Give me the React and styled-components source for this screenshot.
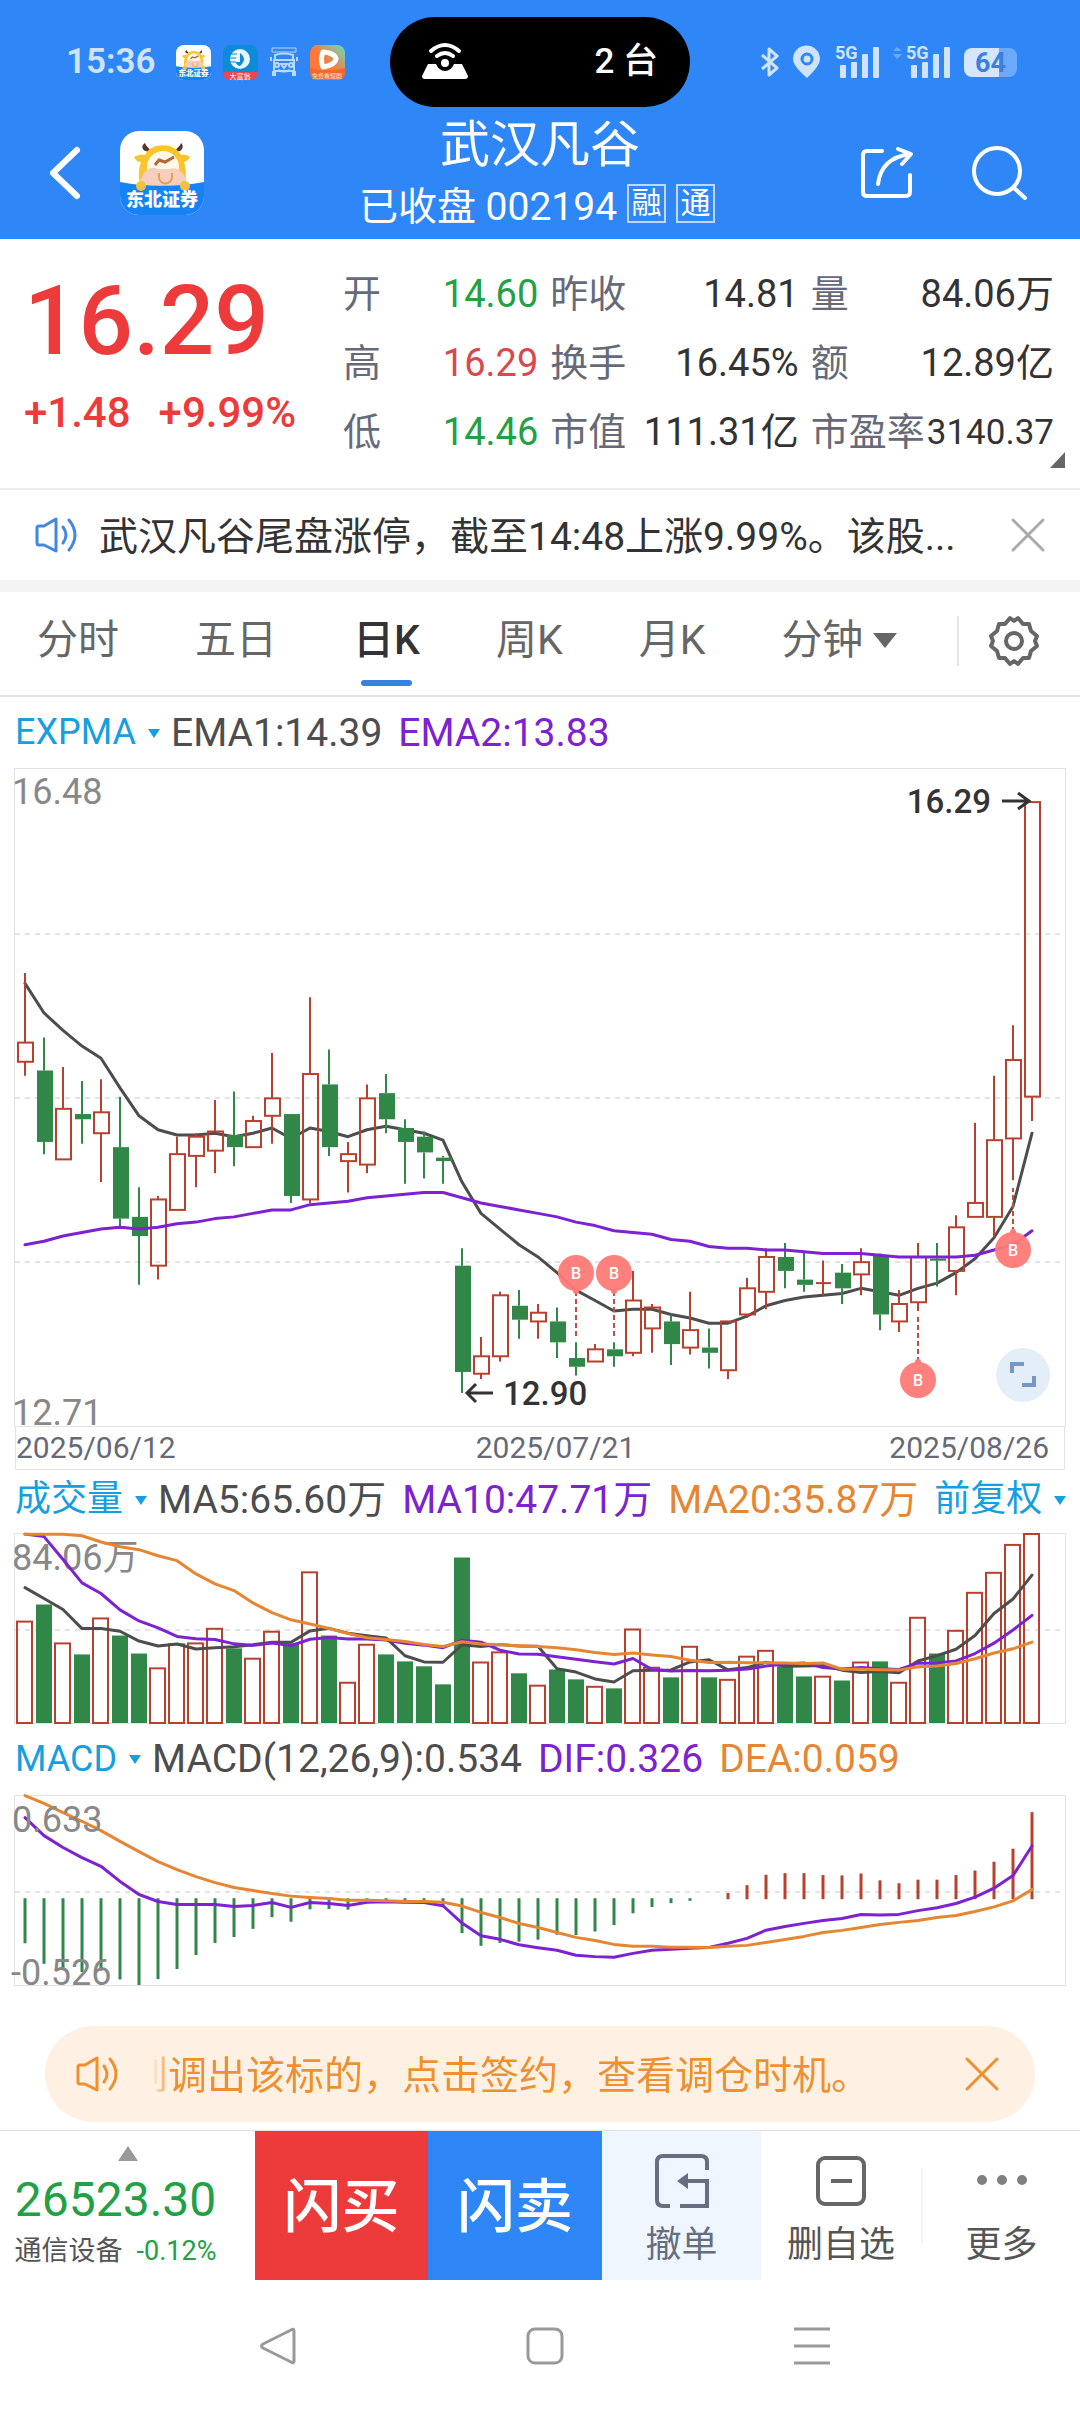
import styled, { createGlobalStyle } from "styled-components";

const RED = "#ed3a3a";
const GREEN = "#22a045";
const BLUE = "#2f86f7";
const UP = "#b8402f";
const DOWN = "#318748";
const LINE_DARK = "#4d4d4d";
const LINE_PURPLE = "#7c22d0";
const LINE_ORANGE = "#e68632";
const GRID = "#e3e3e5";

const quotes = [
  { label: "开", value: "14.60", color: GREEN },
  { label: "昨收", value: "14.81" },
  { label: "量", value: "84.06万" },
  { label: "高", value: "16.29", color: "#d9494b" },
  { label: "换手", value: "16.45%" },
  { label: "额", value: "12.89亿" },
  { label: "低", value: "14.46", color: GREEN },
  { label: "市值", value: "111.31亿" },
  { label: "市盈率", value: "3140.37", small: true },
];

const tabs = ["分时", "五日", "日K", "周K", "月K", "分钟"];

// open, close, high, low, volume
const candles = [
  [14.8, 14.91, 15.31, 14.72, 45.1],
  [14.75, 14.34, 14.94, 14.27, 52.7],
  [14.24, 14.53, 14.77, 14.24, 35.4],
  [14.5, 14.47, 14.69, 14.33, 30.5],
  [14.39, 14.51, 14.7, 14.11, 46.5],
  [14.31, 13.9, 14.6, 13.85, 38.9],
  [13.91, 13.8, 14.08, 13.52, 30.9],
  [13.63, 14.01, 14.03, 13.55, 24.3],
  [13.95, 14.27, 14.37, 13.95, 35],
  [14.26, 14.37, 14.39, 14.08, 35.4],
  [14.29, 14.4, 14.58, 14.16, 41.9],
  [14.38, 14.31, 14.63, 14.2, 33.2],
  [14.31, 14.46, 14.49, 14.31, 28.6],
  [14.49, 14.59, 14.85, 14.33, 40.6],
  [14.5, 14.03, 14.5, 13.99, 35.4],
  [14.01, 14.73, 15.17, 13.99, 67],
  [14.67, 14.31, 14.87, 14.26, 38.9],
  [14.23, 14.27, 14.34, 14.05, 17.9],
  [14.21, 14.59, 14.67, 14.16, 34.8],
  [14.62, 14.47, 14.73, 14.39, 30.5],
  [14.42, 14.34, 14.47, 14.1, 27.4],
  [14.37, 14.28, 14.4, 14.13, 25.2],
  [14.25, 14.23, 14.26, 14.1, 17.2],
  [13.63, 13.02, 13.73, 12.9, 73.6],
  [13.01, 13.11, 13.22, 12.98, 26.9],
  [13.11, 13.46, 13.48, 13.08, 31.4],
  [13.4, 13.32, 13.49, 13.21, 22.1],
  [13.31, 13.36, 13.41, 13.21, 16.6],
  [13.31, 13.19, 13.39, 13.1, 23.8],
  [13.1, 13.05, 13.19, 13.0, 19.4],
  [13.08, 13.15, 13.18, 13.08, 16.1],
  [13.15, 13.11, 13.19, 13.05, 15.4],
  [13.13, 13.43, 13.6, 13.11, 41.6],
  [13.27, 13.39, 13.41, 13.13, 24.6],
  [13.31, 13.18, 13.35, 13.06, 20.3],
  [13.16, 13.26, 13.48, 13.12, 33.9],
  [13.16, 13.13, 13.27, 13.04, 20.3],
  [13.03, 13.31, 13.31, 12.98, 19.2],
  [13.35, 13.5, 13.56, 13.33, 29.5],
  [13.48, 13.68, 13.73, 13.38, 32.1],
  [13.68, 13.6, 13.76, 13.5, 25.2],
  [13.55, 13.52, 13.71, 13.48, 20.7],
  [13.53, 13.53, 13.66, 13.46, 20.6],
  [13.59, 13.5, 13.64, 13.41, 18.9],
  [13.58, 13.65, 13.73, 13.46, 26.9],
  [13.69, 13.35, 13.7, 13.26, 27.4],
  [13.31, 13.41, 13.49, 13.25, 17.9],
  [13.42, 13.68, 13.76, 13.37, 46.8],
  [13.67, 13.66, 13.76, 13.51, 30.9],
  [13.6, 13.85, 13.92, 13.46, 41],
  [13.91, 13.99, 14.45, 13.91, 57.9],
  [13.91, 14.35, 14.72, 13.79, 66.8],
  [14.36, 14.81, 15.01, 14.12, 79.2],
  [14.6, 16.29, 16.29, 14.46, 84.06],
];

const ema1 = [
  15.25, 15.08, 14.98, 14.89, 14.82, 14.65, 14.49, 14.41, 14.38, 14.38, 14.39,
  14.37, 14.39, 14.42, 14.36, 14.42, 14.4, 14.37, 14.41, 14.43, 14.41, 14.39,
  14.35, 14.11, 13.93, 13.84, 13.75, 13.68, 13.59, 13.49, 13.43, 13.37, 13.38,
  13.38, 13.35, 13.33, 13.3, 13.3, 13.34, 13.4, 13.43, 13.45, 13.46, 13.47,
  13.5, 13.48, 13.46, 13.5, 13.53, 13.59, 13.67, 13.79, 13.97, 14.39,
];

const ema2 = [
  13.75, 13.77, 13.8, 13.82, 13.84, 13.85, 13.84, 13.85, 13.87, 13.88, 13.9,
  13.91, 13.93, 13.95, 13.95, 13.98, 13.99, 14.0, 14.02, 14.03, 14.04, 14.05,
  14.05, 14.02, 13.99, 13.97, 13.95, 13.93, 13.91, 13.88, 13.86, 13.83, 13.82,
  13.81, 13.78, 13.77, 13.74, 13.73, 13.73, 13.72, 13.72, 13.71, 13.7, 13.7,
  13.7, 13.69, 13.68, 13.68, 13.68, 13.68, 13.69, 13.72, 13.75, 13.83,
];

const dif = [
  0.5, 0.39, 0.317, 0.255, 0.202, 0.109, 0.029, -0.014, -0.032, -0.032, -0.032,
  -0.044, -0.038, -0.02, -0.05, -0.02, -0.026, -0.038, -0.018, -0.016, -0.018,
  -0.02, -0.04, -0.146, -0.224, -0.246, -0.279, -0.297, -0.313, -0.344, -0.352,
  -0.356, -0.332, -0.313, -0.307, -0.3, -0.296, -0.27, -0.24, -0.19, -0.167,
  -0.148, -0.13, -0.118, -0.094, -0.097, -0.093, -0.07, -0.052, -0.026, 0.013,
  0.068, 0.145, 0.326,
];

const dea = [
  0.635, 0.588, 0.531, 0.478, 0.421, 0.355, 0.292, 0.231, 0.182, 0.139, 0.102,
  0.072, 0.053, 0.035, 0.019, 0.011, 0.004, -0.006, -0.006, -0.01, -0.014,
  -0.014, -0.018, -0.042, -0.081, -0.112, -0.149, -0.173, -0.204, -0.234,
  -0.253, -0.277, -0.289, -0.289, -0.295, -0.295, -0.296, -0.289, -0.283,
  -0.265, -0.247, -0.228, -0.204, -0.191, -0.173, -0.155, -0.142, -0.13,
  -0.112, -0.1, -0.075, -0.047, -0.01, 0.059,
];

// averages of the days before the first visible candle
const ma5Head = [60.2, 55.4, 50.5, 42];
const ma10Head = [84, 82.9, 72.7, 62.3, 57.6, 50.3, 45.4, 42.3, 38.5];
const ma20Head = [
  84, 84, 84, 83.3, 80.5, 78.4, 77.1, 74.4, 72.2, 66.3, 61.9, 58.9, 53.4, 49.1,
  45.9, 44, 42, 39.8, 37.9,
];

const markers = [
  { index: 29, y: 504, from: 522, to: 567 },
  { index: 31, y: 504, from: 522, to: 567 },
  { index: 47, y: 611, from: 593, to: 546 },
  { index: 52, y: 481, from: 463, to: 419 },
];

const W = 1050;
const PRICE_H = 657;
const SUB_H = 189;

const x = (i) => 10 + i * 19;
const priceY = (p) => ((16.48 - p) / (16.48 - 12.71)) * PRICE_H;
const volY = (v) => SUB_H - (v / 84.06) * SUB_H;
const macdY = (v) => ((0.633 - v) / (0.633 + 0.526)) * SUB_H;
const points = (values, y) => values.map((v, i) => `${x(i)},${y(v)}`).join(" ");

const movingAverage = (head, n) =>
  candles.map((_, i) => {
    if (i < n - 1) return head[i];
    const part = candles.slice(i - n + 1, i + 1);
    return part.reduce((sum, c) => sum + c[4], 0) / n;
  });

const Line = ({ values, y, color }) => (
  <polyline
    points={points(values, y)}
    fill="none"
    stroke={color}
    strokeWidth="3"
    strokeLinejoin="round"
    strokeLinecap="round"
  />
);

const GridLine = ({ y }) => (
  <line x1="0" x2={W} y1={y} y2={y} stroke={GRID} strokeWidth="2" strokeDasharray="5 5" />
);

const PriceChart = () => (
  <Chart viewBox={`0 0 ${W} ${PRICE_H}`} role="img" aria-label="日K线">
    <GridLine y={165} />
    <GridLine y={329} />
    <GridLine y={493} />
    <Line values={ema1} y={priceY} color={LINE_DARK} />
    {candles.map(([open, close, high, low], i) => {
      const up = close >= open;
      const top = priceY(Math.max(open, close));
      const bottom = priceY(Math.min(open, close));
      const color = up ? UP : DOWN;
      return (
        <g key={i} stroke={color} strokeWidth="2">
          <line x1={x(i)} x2={x(i)} y1={priceY(high)} y2={top} />
          <line x1={x(i)} x2={x(i)} y1={bottom} y2={priceY(low)} />
          {up ? (
            <rect x={x(i) - 7} y={top} width="15" height={bottom - top} fill="none" />
          ) : (
            <rect
              x={x(i) - 7}
              y={top}
              width="16"
              height={Math.max(bottom - top, 2)}
              fill={DOWN}
              stroke="none"
            />
          )}
          {open === close && <line x1={x(i) - 7} x2={x(i) + 8} y1={top} y2={top} />}
        </g>
      );
    })}
    <Line values={ema2} y={priceY} color={LINE_PURPLE} />
    {markers.map((m) => (
      <g key={m.index}>
        <line
          x1={x(m.index)}
          x2={x(m.index)}
          y1={m.from}
          y2={m.to}
          stroke="#c44a45"
          strokeWidth="2"
          strokeDasharray="5 3"
        />
        <circle cx={x(m.index)} cy={m.from} r="3" fill="#ff7a76" />
        <circle cx={x(m.index)} cy={m.y} r="18" fill="#ff7a76" fillOpacity="0.95" />
        <text x={x(m.index)} y={m.y + 6} fontSize="16" fontWeight="500" fill="#fff" textAnchor="middle">
          B
        </text>
      </g>
    ))}
    <g stroke="#333" strokeWidth="3" fill="none">
      <path d="M987 32h26M1003 24l11 8-11 8" />
      <path d="M478 624h-26M461 615l-9 9 9 9" />
    </g>
    <g fill="#333" fontSize="33" fontWeight="500">
      <text x="976" y="44" textAnchor="end">16.29</text>
      <text x="488" y="636">12.90</text>
    </g>
    <g fill="#888" fontSize="36">
      <text x="-3" y="35">16.48</text>
      <text x="-3" y="656">12.71</text>
    </g>
  </Chart>
);

const VolumeChart = () => (
  <Chart viewBox={`0 0 ${W} ${SUB_H}`} role="img" aria-label="成交量">
    <GridLine y={96} />
    <text x="-3" y="36" fill="#888" fontSize="36">
      84.06万
    </text>
    {candles.map(([open, close, , , vol], i) =>
      close >= open ? (
        <rect
          key={i}
          x={x(i) - 8}
          y={volY(vol)}
          width="15"
          height={SUB_H - volY(vol)}
          fill="none"
          stroke={UP}
          strokeWidth="2"
        />
      ) : (
        <rect key={i} x={x(i) - 8} y={volY(vol)} width="16" height={SUB_H - volY(vol)} fill={DOWN} />
      )
    )}
    <Line values={movingAverage(ma5Head, 5)} y={volY} color={LINE_DARK} />
    <Line values={movingAverage(ma10Head, 10)} y={volY} color={LINE_PURPLE} />
    <Line values={movingAverage(ma20Head, 20)} y={volY} color={LINE_ORANGE} />
  </Chart>
);

const MacdChart = () => (
  <Chart viewBox={`0 0 ${W} ${SUB_H}`} role="img" aria-label="MACD">
    <GridLine y={96} />
    {dif.map((d, i) => {
      const value = 2 * (d - dea[i]);
      if (Math.abs(value) < 0.004) return null;
      return (
        <line
          key={i}
          x1={x(i)}
          x2={x(i)}
          y1={value > 0 ? macdY(0) : macdY(0) - 1}
          y2={macdY(value)}
          stroke={value > 0 ? UP : DOWN}
          strokeWidth="3"
        />
      );
    })}
    <Line values={dif} y={macdY} color={LINE_PURPLE} />
    <Line values={dea} y={macdY} color={LINE_ORANGE} />
    <g fill="#888" fontSize="36">
      <text x="-3" y="36">0.633</text>
      <text x="-4" y="189">-0.526</text>
    </g>
  </Chart>
);

const BrokerLogo = ({ size }) => (
  <svg width={size} height={size} viewBox="0 0 84 84">
    <defs>
      <clipPath id={`logo${size}`}>
        <rect width="84" height="84" rx="19" />
      </clipPath>
    </defs>
    <g clipPath={`url(#logo${size})`}>
      <rect width="84" height="84" fill="#fff" />
      <path d="M25 20C21 17 22 14 25 12C26 16 30 17 31 21ZM60 20C64 17 63 14 61 12C60 16 56 17 55 21Z" fill="#5b3328" />
      <path d="M14 26C19 23 22 24 25 24C31 11 54 11 61 24C64 24 66 23 70 26C68 30 65 31 64 31C67 40 66 48 64 57H22C18 48 18 39 21 31C18 31 15 29 14 26Z" fill="#f9c52d" />
      <ellipse cx="43" cy="36" rx="16" ry="16" fill="#fff8e8" />
      <path d="M20 52C22 39 32 34 38 38H49C58 35 66 43 67 54H20Z" fill="#f7cdbd" />
      <path d="M35 34l4-5 6 2 9-5" fill="none" stroke="#b4653b" strokeWidth="3" />
      <path d="M39 42v4a6 6 0 0 0 13 0v-4" fill="none" stroke="#e3a04a" strokeWidth="2" />
      <path d="M0 51Q42 59 84 51V84H0Z" fill="#1683f4" />
      <circle cx="21" cy="55" r="5" fill="#f0c33a" />
      <circle cx="65" cy="55" r="5" fill="#f0c33a" />
      <text x="42" y="75" fontSize="18" fontWeight="900" fill="#fff" textAnchor="middle">
        东北证券
      </text>
    </g>
  </svg>
);

const BankIcon = () => (
  <svg width="35" height="35" viewBox="0 0 35 35">
    <rect width="35" height="35" rx="8" fill="#0c8bd6" />
    <circle cx="17" cy="14" r="10" fill="#e8f6ff" />
    <path d="M17 8q8 6 0 13q-4-1-4-4h4z" fill="#0c8bd6" />
    <path d="M5 9h9M5 13h8M5 17h8" stroke="#0c8bd6" strokeWidth="1" />
    <path d="M0 27h35q0 8-8 8H8q-8 0-8-8z" fill="#e8484f" />
    <text x="17" y="34" fontSize="7" fill="#fff" textAnchor="middle">
      大富翁
    </text>
  </svg>
);

const BusIcon = () => (
  <svg width="28" height="30" viewBox="0 0 28 30" fill="none" stroke="#bcd8ff" strokeWidth="2">
    <path d="M2 1h24v4H2z" strokeWidth="1" />
    <path d="M5 13V8q9-3 18 0v5zM4 12v12h20V12M8 23q6 3 12 0M1 10v4M27 10v4" />
    <circle cx="7" cy="18" r="2" />
    <circle cx="21" cy="18" r="2" />
    <path d="M4 24v5M24 24v5" strokeWidth="4" />
    <path d="M11 17h6l-3 4z" />
  </svg>
);

const VideoIcon = () => (
  <svg width="35" height="35" viewBox="0 0 35 35">
    <defs>
      <linearGradient id="video" x1="0" y1="1" x2="1" y2="0">
        <stop offset="0.5" stopColor="#fb7a3a" />
        <stop offset="1" stopColor="#5fe0c8" />
      </linearGradient>
    </defs>
    <rect width="35" height="35" rx="8" fill="url(#video)" />
    <path d="M0 23q17 5 35 0v4q0 8-8 8H8q-8 0-8-8z" fill="#f9652b" />
    <path d="M13 7q12 1 13 7q-1 6-13 8q-3-8 0-15z" fill="none" stroke="#fff" strokeWidth="5" strokeLinejoin="round" />
    <text x="17" y="33" fontSize="6" fill="#ffe8d0" textAnchor="middle">
      免费看短剧
    </text>
  </svg>
);

const Signal = () => (
  <svg width="44" height="32" viewBox="0 0 44 32" fill="#cfe3ff">
    <text x="0" y="13" fontSize="18" fontWeight="700">
      5G
    </text>
    <rect x="5" y="19" width="6" height="13" rx="1" />
    <rect x="16" y="16" width="6" height="16" rx="1" />
    <rect x="27" y="8" width="6" height="24" rx="1" />
    <rect x="38" y="1" width="6" height="31" rx="1" />
  </svg>
);

const SpeakerIcon = ({ color }) => (
  <svg width="46" height="38" viewBox="0 0 46 38" fill="none" stroke={color} strokeWidth="3" strokeLinecap="round" strokeLinejoin="round">
    <path d="M9 10L21 3V35L9 29H4Q2 29 2 27V12Q2 10 4 10Z" />
    <path d="M28 11Q34 19 28 27M34 4Q46 19 34 34" />
  </svg>
);

const CloseIcon = ({ color }) => (
  <svg width="34" height="34" viewBox="0 0 34 34" stroke={color} strokeWidth="3" strokeLinecap="round">
    <path d="M2 2L32 32M32 2L2 32" />
  </svg>
);

const GearIcon = () => (
  <svg width="50" height="50" viewBox="0 0 50 50" fill="none" stroke="#666" strokeWidth="4" strokeLinejoin="round">
    <path d="M25 5L29 2L34 8L40 8L42 15L48 20L46 25L48 30L42 35L40 42L34 42L29 48L25 45L21 48L16 42L10 42L8 35L2 30L4 25L2 20L8 15L10 8L16 8L21 2Z" />
    <circle cx="25" cy="25" r="8" />
  </svg>
);

const App = () => {
  return (
    <Page>
      <GlobalStyle />
      <TopArea>
        <StatusBar>
          <StatusLeft>
            <Clock>15:36</Clock>
            <BrokerLogo size={35} />
            <BankIcon />
            <BusIcon />
            <VideoIcon />
          </StatusLeft>
          <Island>
            <svg width="46" height="36" viewBox="0 0 46 36">
              <path d="M6 20H14Q17 27 23 27Q29 27 32 20H40L46 32Q46 35 43 35H3Q0 35 0 32Z" fill="#fff" />
              <circle cx="23" cy="19" r="4" fill="#fff" />
              <path d="M15 12q8-6 16 0M9 7q14-12 28 0" fill="none" stroke="#fff" strokeWidth="4" strokeLinecap="round" />
            </svg>
            <span>2 台</span>
          </Island>
          <StatusRight>
            <svg width="18" height="32" viewBox="0 0 18 32" fill="none" stroke="#cfe3ff" strokeWidth="3" strokeLinejoin="round">
              <path d="M1 9L16 22L8 29V3L16 10L1 23" />
            </svg>
            <svg width="28" height="32" viewBox="0 0 28 32" fill="none">
              <path d="M14 32Q0 20 0 13a13 13 0 0 1 27 0Q27 20 14 32Z" fill="#cfe3ff" />
              <circle cx="14" cy="13" r="5" stroke={BLUE} strokeWidth="3" />
            </svg>
            <Signal />
            <SignalPair>
              <svg width="9" height="32" viewBox="0 0 9 32" fill="#6aa9fb">
                <path d="M0 5L4 1L9 5ZM0 8H9L4 13Z" />
              </svg>
              <Signal />
            </SignalPair>
            <Battery>64</Battery>
          </StatusRight>
        </StatusBar>
        <Header>
          <HeaderSide>
            <IconButton aria-label="返回">
              <svg width="30" height="52" viewBox="0 0 30 52" fill="none" stroke="#fff" strokeWidth="6" strokeLinecap="round" strokeLinejoin="round">
                <path d="M27 3L3 26L27 49" />
              </svg>
            </IconButton>
            <BrokerLogo size={84} />
          </HeaderSide>
          <TitleBlock>
            <Title>武汉凡谷</Title>
            <SubTitle>
              已收盘 002194
              <Tag>融</Tag>
              <Tag>通</Tag>
            </SubTitle>
          </TitleBlock>
          <HeaderSide $end>
            <IconButton aria-label="分享">
              <svg width="54" height="54" viewBox="0 0 54 54" fill="none" stroke="#fff" strokeWidth="4" strokeLinecap="round" strokeLinejoin="round">
                <path d="M22 5H7Q3 5 3 9V46Q3 50 7 50H45Q50 50 50 46V29" />
                <path d="M18 38Q21 12 50 8M38 3L51 8L42 18" />
              </svg>
            </IconButton>
            <IconButton aria-label="搜索">
              <svg width="56" height="54" viewBox="0 0 56 54" fill="none" stroke="#fff" strokeWidth="4" strokeLinecap="round">
                <circle cx="25" cy="25" r="23" />
                <path d="M42 42L53 52" />
              </svg>
            </IconButton>
          </HeaderSide>
        </Header>
      </TopArea>

      <Summary>
        <PriceBlock>
          <Price>16.29</Price>
          <Change>
            <span>+1.48</span>
            <span>+9.99%</span>
          </Change>
        </PriceBlock>
        <Quotes>
          {quotes.map((q) => (
            <Quote key={q.label}>
              <QuoteLabel>{q.label}</QuoteLabel>
              <QuoteValue $color={q.color} $small={q.small}>
                {q.value}
              </QuoteValue>
            </Quote>
          ))}
        </Quotes>
        <Corner />
      </Summary>

      <News>
        <SpeakerIcon color="#4288dc" />
        <NewsText>武汉凡谷尾盘涨停，截至14:48上涨9.99%。该股...</NewsText>
        <IconButton aria-label="关闭">
          <CloseIcon color="#aaa" />
        </IconButton>
      </News>

      <Tabs>
        <TabList>
          {tabs.map((tab) => (
            <Tab key={tab} $active={tab === "日K"}>
              {tab}
              {tab === "分钟" && <Caret $size={12} $color="#666" />}
            </Tab>
          ))}
        </TabList>
        <SettingsButton aria-label="设置">
          <GearIcon />
        </SettingsButton>
      </Tabs>

      <Charts>
        <Legend $height={72}>
          <Picker>
            EXPMA
            <Caret $size={6} $color="#159fe0" />
          </Picker>
          <Value>EMA1:14.39</Value>
          <Value $color={LINE_PURPLE}>EMA2:13.83</Value>
        </Legend>
        <ChartBox>
          <PriceChart />
          <ExpandButton aria-label="全屏">
            <svg width="26" height="26" viewBox="0 0 26 26" fill="none" stroke="#7499c8" strokeWidth="4">
              <path d="M2 11V2H14M24 14V23H12" />
            </svg>
          </ExpandButton>
        </ChartBox>
        <Dates>
          <span>2025/06/12</span>
          <span>2025/07/21</span>
          <span>2025/08/26</span>
        </Dates>

        <Legend $height={64} $lift>
          <Picker>
            成交量
            <Caret $size={6} $color="#159fe0" />
          </Picker>
          <Value>MA5:65.60万</Value>
          <Value $color={LINE_PURPLE}>MA10:47.71万</Value>
          <Value $color={LINE_ORANGE}>MA20:35.87万</Value>
          <Picker>
            前复权
            <Caret $size={6} $color="#159fe0" />
          </Picker>
        </Legend>
        <ChartBox>
          <VolumeChart />
        </ChartBox>

        <Legend $height={73}>
          <Picker>
            MACD
            <Caret $size={6} $color="#159fe0" />
          </Picker>
          <Value>MACD(12,26,9):0.534</Value>
          <Value $color={LINE_PURPLE}>DIF:0.326</Value>
          <Value $color={LINE_ORANGE}>DEA:0.059</Value>
        </Legend>
        <ChartBox>
          <MacdChart />
        </ChartBox>
      </Charts>

      <Notice>
        <SpeakerIcon color="#ee9030" />
        <NoticeText>
          <span>到调出该标的，点击签约，查看调仓时机。</span>
        </NoticeText>
        <IconButton aria-label="关闭">
          <CloseIcon color="#ee9030" />
        </IconButton>
      </Notice>

      <BottomBar>
        <Sector>
          <SectorArrow />
          <SectorIndex>26523.30</SectorIndex>
          <SectorRow>
            通信设备 <span>-0.12%</span>
          </SectorRow>
        </Sector>
        <TradeButton $color={RED}>闪买</TradeButton>
        <TradeButton $color={BLUE}>闪卖</TradeButton>
        <ActionButton $tint>
          <svg width="54" height="54" viewBox="0 0 54 54" fill="none" stroke="#666e80" strokeWidth="4">
            <path d="M52 16V8Q52 2 46 2H8Q2 2 2 8V46Q2 52 8 52H15M25 52H52V27H28" />
            <path d="M33 19V35L22 27Z" fill="#666e80" stroke="none" />
          </svg>
          撤单
        </ActionButton>
        <ActionButton>
          <svg width="54" height="54" viewBox="0 0 54 54" fill="none" stroke="#666" strokeWidth="4">
            <rect x="4" y="4" width="46" height="46" rx="7" />
            <path d="M17 27H38" />
          </svg>
          删自选
        </ActionButton>
        <Divider />
        <ActionButton>
          <svg width="54" height="54" viewBox="0 0 54 54" fill="#808080">
            <circle cx="7" cy="26" r="5" />
            <circle cx="27" cy="26" r="5" />
            <circle cx="47" cy="26" r="5" />
          </svg>
          更多
        </ActionButton>
      </BottomBar>

      <SystemNav>
        <IconButton aria-label="后退">
          <svg width="38" height="38" viewBox="0 0 38 38" fill="none" stroke="#999" strokeWidth="3" strokeLinejoin="round">
            <path d="M35 4V34Q35 37 32 35L4 21Q1 19 4 17L32 3Q35 1 35 4Z" />
          </svg>
        </IconButton>
        <IconButton aria-label="主屏幕">
          <svg width="38" height="38" viewBox="0 0 38 38" fill="none" stroke="#999" strokeWidth="3">
            <rect x="2" y="2" width="34" height="34" rx="7" />
          </svg>
        </IconButton>
        <IconButton aria-label="菜单">
          <svg width="38" height="38" viewBox="0 0 38 38" stroke="#999" strokeWidth="3">
            <path d="M1 2H37M1 19H37M1 36H37" />
          </svg>
        </IconButton>
      </SystemNav>
    </Page>
  );
};

const GlobalStyle = createGlobalStyle`
  * {
    box-sizing: border-box;
  }
  body {
    margin: 0;
    background: #fff;
    font-family: Roboto, "Noto Sans CJK SC", sans-serif;
    line-height: 1.2;
  }
  button {
    margin: 0;
    padding: 0;
    border: 0;
    background: none;
    color: inherit;
    font: inherit;
  }
  svg {
    display: block;
    flex-shrink: 0;
    overflow: visible;
  }
`;

const Page = styled.div`
  color: #333;
  white-space: nowrap;
`;

const TopArea = styled.div`
  background: ${BLUE};
  color: #fff;
`;

const StatusBar = styled.div`
  display: grid;
  grid-template-columns: 1fr 300px 1fr;
  align-items: center;
  padding-top: 17px;
`;

const StatusLeft = styled.div`
  display: flex;
  align-items: center;
  gap: 12px;
  padding-left: 66px;
`;

const Clock = styled.span`
  color: #cfe3ff;
  font-size: 35px;
  font-weight: 600;
  margin-right: 8px;
`;

const Island = styled.div`
  display: flex;
  align-items: center;
  justify-content: space-between;
  height: 90px;
  padding: 0 32px;
  border-radius: 45px;
  background: #000;
  font-size: 35px;
  font-weight: 500;
`;

const StatusRight = styled.div`
  display: flex;
  align-items: center;
  justify-content: flex-end;
  gap: 14px;
  padding-right: 63px;
`;

const SignalPair = styled.div`
  display: flex;
  gap: 4px;
`;

const Battery = styled.div`
  width: 53px;
  height: 29px;
  border-radius: 8px;
  background: linear-gradient(90deg, #d5e7ff 66%, #6aa9fb 66%);
  color: #3a80e0;
  font-size: 27px;
  font-weight: 700;
  line-height: 30px;
  text-align: center;
`;

const Header = styled.header`
  display: grid;
  grid-template-columns: 1fr auto 1fr;
  align-items: center;
  height: 132px;
`;

const HeaderSide = styled.div`
  display: flex;
  align-items: center;
  justify-content: ${(p) => (p.$end ? "flex-end" : "flex-start")};
  gap: ${(p) => (p.$end ? 58 : 40)}px;
  padding: ${(p) => (p.$end ? "0 52px 0 0" : "0 0 0 50px")};
`;

const IconButton = styled.button`
  display: flex;
  align-items: center;
  justify-content: center;
`;

const TitleBlock = styled.div`
  display: flex;
  flex-direction: column;
  align-items: center;
`;

const Title = styled.h1`
  margin: 0;
  font-size: 50px;
  font-weight: 400;
  line-height: 68px;
`;

const SubTitle = styled.div`
  display: flex;
  align-items: center;
  gap: 10px;
  padding-right: 6px;
  font-size: 39px;
  line-height: 56px;
`;

const Tag = styled.span`
  width: 39px;
  height: 39px;
  margin-bottom: 8px;
  border: 2px solid #bcd8ff;
  font-size: 30px;
  line-height: 34px;
  text-align: center;
`;

const Summary = styled.section`
  position: relative;
  display: flex;
  padding: 21px 26px 21px 0;
  border-bottom: 2px solid #ececec;
`;

const PriceBlock = styled.div`
  width: 343px;
  padding-left: 24px;
  color: ${RED};
  font-weight: 500;
`;

const Price = styled.div`
  font-size: 96px;
  line-height: 122px;
`;

const Change = styled.div`
  display: flex;
  gap: 28px;
  font-size: 42px;
  line-height: 62px;
`;

const Quotes = styled.div`
  flex: 1;
  display: grid;
  grid-template-columns: 195fr 248fr 243fr;
  column-gap: 12px;
  font-size: 38px;
  line-height: 69px;
`;

const Quote = styled.div`
  display: flex;
  justify-content: space-between;
`;

const QuoteLabel = styled.span`
  color: #666a78;
`;

const QuoteValue = styled.span`
  color: ${(p) => p.$color || "#333"};
  font-size: ${(p) => (p.$small ? 35 : 38)}px;
`;

const Corner = styled.i`
  position: absolute;
  right: 15px;
  bottom: 20px;
  border-left: 15px solid transparent;
  border-bottom: 16px solid #666;
`;

const News = styled.section`
  display: flex;
  align-items: center;
  height: 102px;
  padding: 0 35px;
  gap: 18px;
  border-bottom: 12px solid #f4f4f4;
`;

const NewsText = styled.div`
  flex: 1;
  overflow: hidden;
  padding-top: 3px;
  font-size: 39px;
  line-height: 60px;
`;

const Tabs = styled.nav`
  display: flex;
  align-items: center;
  justify-content: space-between;
  height: 105px;
  padding: 0 41px 6px 37px;
  border-bottom: 2px solid #e2e2e2;
`;

const TabList = styled.div`
  display: flex;
  gap: 76px;
`;

const Tab = styled.button`
  position: relative;
  display: flex;
  align-items: center;
  gap: 10px;
  height: 90px;
  color: ${(p) => (p.$active ? "#333" : "#666")};
  font-size: 41px;
  font-weight: ${(p) => (p.$active ? 500 : 400)};

  &::after {
    content: "";
    position: absolute;
    left: 8px;
    right: 8px;
    bottom: 0;
    height: 6px;
    border-radius: 3px;
    background: ${(p) => (p.$active ? "#3a80e0" : "none")};
  }
`;

const Caret = styled.i`
  border: ${(p) => p.$size}px solid transparent;
  border-top: ${(p) => p.$size + 3}px solid ${(p) => p.$color};
  border-bottom: 0;
`;

const SettingsButton = styled.button`
  display: flex;
  padding-left: 30px;
  border-left: 2px solid #e2e2e2;
`;

const Charts = styled.main`
  padding: 0 15px;
`;

const Legend = styled.div`
  display: flex;
  align-items: center;
  gap: 16px;
  height: ${(p) => p.$height}px;
  padding-bottom: ${(p) => (p.$lift ? 4 : 0)}px;
  font-size: 39px;
`;

const Picker = styled.button`
  display: flex;
  align-items: center;
  gap: 12px;
  margin-right: -5px;
  color: #159fe0;
  font-size: 36px;
`;

const Value = styled.span`
  color: ${(p) => p.$color || LINE_DARK};
`;

const ChartBox = styled.div`
  position: relative;
  box-shadow: 0 0 0 1px ${GRID};
`;

const Chart = styled.svg`
  width: 100%;
  height: auto;
`;

const ExpandButton = styled.button`
  position: absolute;
  right: 15px;
  bottom: 24px;
  display: flex;
  align-items: center;
  justify-content: center;
  width: 54px;
  height: 54px;
  border-radius: 50%;
  background: #e3eef9;
`;

const Dates = styled.div`
  display: grid;
  grid-template-columns: 460fr 414fr auto;
  height: 44px;
  padding-right: 15px;
  border: 1px solid ${GRID};
  color: #666a78;
  font-size: 30px;
  line-height: 42px;
`;

const Notice = styled.aside`
  display: flex;
  align-items: center;
  gap: 30px;
  height: 96px;
  margin: 41px 45px 8px;
  padding: 0 36px 0 31px;
  border-radius: 48px;
  background: #fef0e3;
  color: #ee9030;
`;

const NoticeText = styled.div`
  flex: 1;
  overflow: hidden;
  padding-top: 3px;
  font-size: 39px;
  line-height: 60px;
  mask-image: linear-gradient(90deg, transparent, #000 20px);

  span {
    margin-left: -23px;
  }
`;

const BottomBar = styled.footer`
  display: grid;
  grid-template-columns: 255fr 173fr 174fr 159fr 160fr 2px 157fr;
  height: 150px;
  border-top: 1px solid #e2e2e2;
`;

const Sector = styled.div`
  display: flex;
  flex-direction: column;
  align-items: center;
  padding-top: 15px;
  padding-right: 24px;
`;

const SectorArrow = styled.i`
  margin-left: 24px;
  border: 10px solid transparent;
  border-top: 0;
  border-bottom: 15px solid #999;
`;

const SectorIndex = styled.div`
  color: ${GREEN};
  font-size: 48px;
  line-height: 78px;
`;

const SectorRow = styled.div`
  display: flex;
  gap: 14px;
  color: #555;
  font-size: 27px;
  line-height: 24px;

  span {
    color: ${GREEN};
  }
`;

const TradeButton = styled.button`
  padding-top: 5px;
  background: ${(p) => p.$color};
  color: #fff;
  font-size: 58px;
  font-weight: 500;
`;

const ActionButton = styled.button`
  display: flex;
  flex-direction: column;
  align-items: center;
  gap: 10px;
  padding-top: 23px;
  background: ${(p) => (p.$tint ? "#eff6ff" : "none")};
  color: ${(p) => (p.$tint ? "#666e80" : "#555")};
  font-size: 36px;
  line-height: 54px;
`;

const Divider = styled.i`
  align-self: center;
  height: 75px;
  background: #eef4fb;
`;

const SystemNav = styled.nav`
  display: grid;
  grid-template-columns: repeat(3, 1fr);
  height: 132px;
  padding: 0 135px 0 144px;
`;

export default App;
